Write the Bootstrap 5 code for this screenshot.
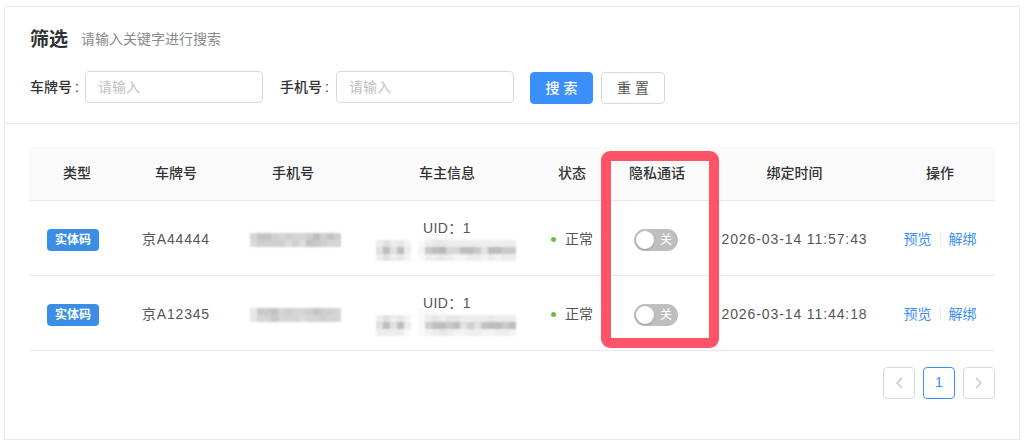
<!DOCTYPE html>
<html lang="zh-CN">
<head>
    <meta charset="UTF-8">
    <meta name="viewport" content="width=device-width, initial-scale=1.0">
    <title>筛选</title>
    <link href="https://cdn.jsdelivr.net/npm/bootstrap@5.3.0/dist/css/bootstrap.min.css" rel="stylesheet">
    <style>
        body {
            background: #fff;
            font-family: "Liberation Sans", "Noto Sans CJK SC", sans-serif;
            font-size: 14px;
            color: #555;
            padding: 6px 5px 0 4px;
        }
        .panel {
            height: 434px;
            border: 1px solid #e8e8e8;
            border-radius: 2px;
        }
        .panel-top {
            height: 117px;
            padding: 21px 24px 0;
            border-bottom: 1px solid #e8e8e8;
        }
        .panel-title {
            font-size: 19px;
            line-height: 24px;
            font-weight: 700;
            color: #333;
            padding-left: 1px;
        }
        .panel-sub {
            color: #8a8a8a;
            margin-left: 13px;
            line-height: 22px;
        }
        .filter-row {
            margin-top: 19px;
        }
        .filter-label {
            width: 56px;
            padding-left: 1px;
            line-height: 32px;
            color: #333;
            font-weight: 500;
            word-spacing: -1px;
        }
        .filter-label.second {
            margin-left: 17px;
            padding-left: 0;
        }
        .filter-input {
            width: 178px;
            height: 32px;
            padding: 0 12px;
            font-size: 14px;
            color: #555;
            border-color: #d9d9d9;
            border-radius: 4px;
        }
        .filter-input::placeholder {
            color: #bfbfbf;
        }
        .act-btn {
            width: 63px;
            height: 32px;
            margin-top: 1px;
            padding: 0 0 0 4px;
            font-size: 14px;
            letter-spacing: 4px;
            border-radius: 4px;
        }
        .act-main {
            background: #3b8ff8;
            border-color: #3b8ff8;
            color: #fff;
            font-weight: 500;
        }
        .act-plain {
            width: 64px;
            background: #fff;
            border-color: #d9d9d9;
            color: #555;
        }
        .panel-main {
            padding: 23px 24px 0;
        }
        .grid-wrap {
            position: relative;
        }
        .data-grid {
            table-layout: fixed;
            width: 966px;
            margin: 0;
            color: #555;
        }
        .data-grid > :not(caption) > * > * {
            padding: 0;
            border-color: #e8e8e8;
            text-align: center;
            vertical-align: middle;
            color: inherit;
            background: transparent;
            box-shadow: none;
        }
        .data-grid > thead > tr > th {
            height: 53px;
            background: #fafafa;
            color: #333;
            font-weight: 500;
        }
        .data-grid > thead > tr > th:nth-child(-n+4),
        .data-grid > thead > tr > th:nth-child(6) {
            padding-left: 2px;
        }
        .data-grid thead th:first-child {
            border-top-left-radius: 4px;
        }
        .data-grid thead th:last-child {
            border-top-right-radius: 4px;
        }
        .data-grid > tbody > tr > td {
            height: 75px;
            padding-top: 4px;
        }
        .data-grid > tbody > tr > td.spaced {
            padding-left: 2px;
            letter-spacing: .8px;
        }
        .code-tag {
            display: inline-block;
            width: 52px;
            height: 22px;
            margin-right: 6px;
            line-height: 22px;
            background: #3a8ee6;
            color: #fff;
            font-size: 12px;
            font-weight: 700;
            border-radius: 4px;
            vertical-align: middle;
        }
        .mosaic {
            display: block;
            filter: blur(.8px);
        }
        .data-grid > tbody > tr > td.owner-cell {
            padding-top: 3px;
        }
        .uid-line {
            padding-left: 2px;
            line-height: 20px;
            letter-spacing: .4px;
            position: relative;
            z-index: 1;
        }
        .owner-cell .mosaic {
            margin: -5px auto 0;
        }
        .phone-mosaic {
            margin: 0 0 0 16px;
        }
        .state-dot {
            display: inline-block;
            width: 5px;
            height: 5px;
            border-radius: 50%;
            background: #6abf40;
            margin-right: 9px;
            vertical-align: 2px;
        }
        .privacy-toggle {
            position: relative;
            display: inline-block;
            width: 44px;
            height: 22px;
            border-radius: 11px;
            background: #bfbfbf;
            color: #fff;
            font-size: 12px;
            line-height: 22px;
            text-align: right;
            padding-right: 6px;
            vertical-align: middle;
        }
        .privacy-toggle::before {
            content: "";
            position: absolute;
            left: 2px;
            top: 2px;
            width: 18px;
            height: 18px;
            border-radius: 50%;
            background: #fff;
            box-shadow: 0 1px 2px rgba(0, 0, 0, .2);
        }
        .data-grid > thead > tr > th.date-cell,
        .data-grid > tbody > tr > td.date-cell {
            padding-left: 15px;
        }
        .data-grid > tbody > tr > td.date-cell {
            letter-spacing: .9px;
        }
        .data-grid tr > .op-cell {
            padding-left: 14px;
        }
        .op-link {
            color: #3b8ff8;
            text-decoration: none;
        }
        .op-sep {
            display: inline-block;
            width: 1px;
            height: 13px;
            background: #e8e8e8;
            margin: 0 8px;
            vertical-align: -2px;
        }
        .call-frame {
            position: absolute;
            left: 572px;
            top: 4px;
            width: 118px;
            height: 197px;
            border: 10px solid #ff5468;
            border-radius: 9px;
            pointer-events: none;
        }
        .pager {
            margin: 16px 0 0;
        }
        .pager .page-link {
            width: 32px;
            height: 32px;
            padding: 0;
            display: flex;
            align-items: center;
            justify-content: center;
            font-size: 14px;
            color: #3b8ff8;
            background: #fff;
            border: 1px solid #d9d9d9;
            border-radius: 4px !important;
            margin: 0 !important;
        }
        .pager .page-item.active .page-link {
            border-color: #3b8ff8;
            color: #3b8ff8;
            background: #fff;
        }
        .pager .page-item.disabled .page-link {
            color: #bfbfbf;
        }
    </style>
</head>
<body>
    <div class="panel bg-white">
        <div class="panel-top">
            <div class="d-flex align-items-start">
                <span class="panel-title">筛选</span>
                <span class="panel-sub">请输入关键字进行搜索</span>
            </div>
            <form class="filter-row d-flex align-items-start">
                <label class="filter-label" for="plateNo">车牌号 :</label>
                <input class="form-control filter-input" id="plateNo" type="text" placeholder="请输入">
                <label class="filter-label second" for="phoneNo">手机号 :</label>
                <input class="form-control filter-input" id="phoneNo" type="text" placeholder="请输入">
                <button class="btn act-btn act-main ms-3" type="button">搜索</button>
                <button class="btn act-btn act-plain ms-2" type="button">重置</button>
            </form>
        </div>
        <div class="panel-main">
            <div class="grid-wrap">
                <table class="table data-grid">
                    <colgroup>
                        <col style="width: 94px">
                        <col style="width: 104px">
                        <col style="width: 130px">
                        <col style="width: 178px">
                        <col style="width: 74px">
                        <col style="width: 94px">
                        <col style="width: 168px">
                        <col style="width: 124px">
                    </colgroup>
                    <thead>
                        <tr>
                            <th>类型</th>
                            <th>车牌号</th>
                            <th>手机号</th>
                            <th>车主信息</th>
                            <th>状态</th>
                            <th>隐私通话</th>
                            <th class="date-cell">绑定时间</th>
                            <th class="op-cell">操作</th>
                        </tr>
                    </thead>
                    <tbody>
                        <tr>
                            <td><span class="code-tag">实体码</span></td>
                            <td class="spaced">京A44444</td>
                            <td><svg class="mosaic phone-mosaic" data-rows="f8557878874757|f9777797956788" width="98" height="14"></svg></td>
                            <td class="owner-cell">
                                <div class="uid-line">UID：1</div>
                                <svg class="mosaic" data-rows="fffffffeeeefffffffff|cacbdfecbbcccccccccc|a4a4cfd64388446a4466|cacbdfeccbcddccdcdcc" width="140" height="28"></svg>
                            </td>
                            <td><span class="state-dot"></span>正常</td>
                            <td><span class="privacy-toggle">关</span></td>
                            <td class="date-cell">2026-03-14 11:57:43</td>
                            <td class="op-cell"><a class="op-link" href="#">预览</a><span class="op-sep"></span><a class="op-link" href="#">解绑</a></td>
                        </tr>
                        <tr>
                            <td><span class="code-tag">实体码</span></td>
                            <td class="spaced">京A12345</td>
                            <td><svg class="mosaic phone-mosaic" data-rows="fb66587887577 8|fb88688898878 8" width="98" height="14"></svg></td>
                            <td class="owner-cell">
                                <div class="uid-line">UID：1</div>
                                <svg class="mosaic" data-rows="ffffffeeeeffffffffff|cacbdfecbcbbccccbccc|a4a4cfe74464a7a54464|ccccefedcbcddccddccd" width="140" height="28"></svg>
                            </td>
                            <td><span class="state-dot"></span>正常</td>
                            <td><span class="privacy-toggle">关</span></td>
                            <td class="date-cell">2026-03-14 11:44:18</td>
                            <td class="op-cell"><a class="op-link" href="#">预览</a><span class="op-sep"></span><a class="op-link" href="#">解绑</a></td>
                        </tr>
                    </tbody>
                </table>
                <div class="call-frame"></div>
            </div>
            <nav>
                <ul class="pagination pager justify-content-end gap-2">
                    <li class="page-item disabled">
                        <a class="page-link" href="#"><svg width="10" height="12" viewBox="0 0 10 12" fill="none" stroke="currentColor" stroke-width="1.2"><path d="M8 1 3 6l5 5"/></svg></a>
                    </li>
                    <li class="page-item active"><a class="page-link" href="#">1</a></li>
                    <li class="page-item disabled">
                        <a class="page-link" href="#"><svg width="10" height="12" viewBox="0 0 10 12" fill="none" stroke="currentColor" stroke-width="1.2"><path d="m2 1 5 5-5 5"/></svg></a>
                    </li>
                </ul>
            </nav>
        </div>
    </div>

    <script>
        // Blurred-out phone numbers and names: one hex digit per 7px cell, f is white
        document.querySelectorAll('.mosaic').forEach(function(svg) {
            const rows = svg.dataset.rows.replace(/ /g, '').split('|');
            let cells = '';
            rows.forEach(function(row, y) {
                row.split('').forEach(function(digit, x) {
                    const grey = 255 - (15 - parseInt(digit, 16)) * 6;
                    cells += `<rect x="${x * 7}" y="${y * 7}" width="7" height="7" fill="rgb(${grey},${grey},${grey})"/>`;
                });
            });
            svg.innerHTML = cells;
        });
    </script>
    <script src="https://cdn.jsdelivr.net/npm/bootstrap@5.3.0/dist/js/bootstrap.bundle.min.js"></script>
</body>
</html>
